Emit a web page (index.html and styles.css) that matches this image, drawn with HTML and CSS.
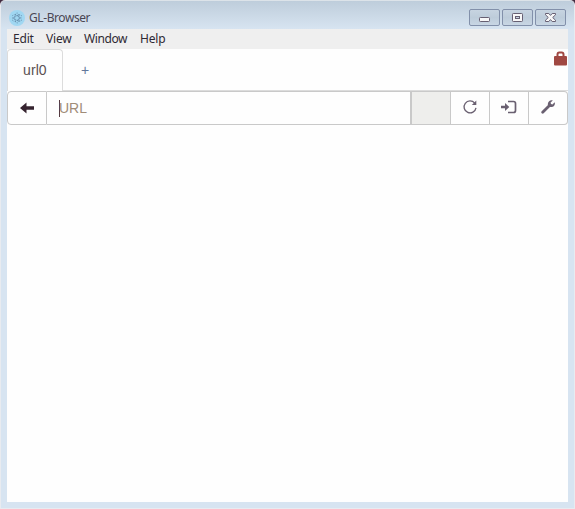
FILE: index.html
```
<!DOCTYPE html>
<html lang="en">
<head>
<meta charset="utf-8">
<title>GL-Browser</title>
<link rel="stylesheet" href="styles.css">
</head>
<body>
<div class="window">
  <header class="titlebar">
    <svg class="app-icon" width="16" height="16" viewBox="0 0 16 16">
      <circle cx="8" cy="8" r="8" fill="#a0d7f2"/>
      <g fill="none" stroke="#587c9c" stroke-width=".8" stroke-dasharray="1.200 1.200">
        <ellipse cx="8" cy="8" rx="2.2" ry="5"/>
        <ellipse cx="8" cy="8" rx="2.2" ry="5" transform="rotate(60 8 8)"/>
        <ellipse cx="8" cy="8" rx="2.2" ry="5" transform="rotate(-60 8 8)"/>
      </g>
    </svg>
    <span class="title">GL-Browser</span>
    <div class="controls">
      <span class="control"><svg width="29" height="15" viewBox="0 0 29 15"><rect x="9.5" y="7.5" width="10" height="4" rx=".8" fill="#f7f7f8" stroke="#665f72"/></svg></span>
      <span class="control"><svg width="29" height="15" viewBox="0 0 29 15"><rect x="9.500" y="3.500" width="10" height="8" rx=".8" fill="#f7f7f8" stroke="#665f72"/><rect x="12.500" y="6.500" width="4" height="2" fill="#c5d1df" stroke="#665f72"/></svg></span>
      <span class="control"><svg width="29" height="15" viewBox="0 0 29 15"><path d="M9.500 3.500h3.300l1.700 1.900 1.700-1.900h3.300v1.300L16.700 7.500l2.800 2.700v1.300h-3.300l-1.700-1.900-1.700 1.900H9.500v-1.300l2.800-2.700-2.800-2.700z" fill="#f7f7f8" stroke="#665f72"/></svg></span>
    </div>
  </header>
  <main class="client">
    <nav class="menu"><span class="edit">Edit</span><span class="view">View</span><span class="win">Window</span><span>Help</span></nav>
    <div class="tabs">
      <span class="tab">url0</span><span class="add">+</span>
      <svg class="lock" width="13" height="15" viewBox="0 0 13 15"><path d="M3.500 7V3.600Q3.500 1.500 5.300 1.500h2.400q1.800 0 1.800 2.100V7" fill="none" stroke="#a04842" stroke-width="2"/><rect y="5" width="13" height="9.500" rx="1" fill="#a04842"/></svg>
    </div>
    <div class="toolbar">
      <button class="btn back" aria-label="Back"><svg width="14" height="12" viewBox="0 0 14 12"><path d="M0 6 6.500 .5V4.300H14v3.400H6.500v3.800z" fill="#35232f"/></svg></button>
      <div class="address"><span class="caret"></span><span class="placeholder">URL</span></div>
      <div class="status"></div>
      <button class="btn" aria-label="Reload"><svg width="16" height="16" viewBox="0 0 16 16"><path d="M12.700 4.100A6 6 0 1 0 14 8.900" fill="none" stroke="#6a6071" stroke-width="1.300"/><path d="M14.300 1.500v4.500H9.800z" fill="#6a6071"/></svg></button>
      <button class="btn" aria-label="Open"><svg width="16" height="14" viewBox="0 0 16 14"><path d="M0 5.700h4V3L8.300 7 4 11V8.300H0z" fill="#6a6071"/><path d="M7 1.500h5.500q2 0 2 2v7q0 2-2 2H7" fill="none" stroke="#6a6071" stroke-width="1.700"/></svg></button>
      <button class="btn last" aria-label="Settings"><svg width="14" height="14" viewBox="0 0 14 14"><path d="M1.700 12.300 9 5" stroke="#6a6071" stroke-width="2.800" stroke-linecap="round"/><path d="M11.800.4 9.600 2.600l.3 1.500 1.500.3 2.300-2.200c.8 2.300-.6 4.900-3.200 4.900-.6 0-1.100-.1-1.600-.3L6.800 4.700C6.500 1.600 9.100-.5 11.800.4z" fill="#6a6071"/></svg></button>
    </div>
  </main>
</div>
</body>
</html>
```
FILE: styles.css
```
* { box-sizing: border-box; }
html { background: #412a40; }
body { margin: 0; }
.window {
  height: 509px;
  padding: 0 6px 6px;
  border: 1px solid #e8ebf0;
  border-top-color: #dce3e9;
  border-radius: 5px 5px 0 0;
  background: linear-gradient(#becddb 0, #d7e4f1 28px, #d7e4f1 100%);
}
.titlebar {
  display: flex;
  align-items: flex-start;
  height: 28px;
  padding: 9px 2px 0 2px;
}
.title {
  margin-left: 4px;
  font: 12px/16px "Noto Sans", sans-serif;
  letter-spacing: -.42px;
  color: #494653;
}
.controls { display: flex; gap: 2px; margin: -1px 0 0 auto; }
.control {
  display: flex;
  width: 31px;
  height: 17px;
  border: 1px solid #8290aa;
  border-radius: 2px;
  background: linear-gradient(#c7d4e1, #bdccda 50%, #c8d6e4);
}
.client { height: 473px; background: #fefefe; }
.menu {
  display: flex;
  height: 20px;
  padding-left: 6px;
  background: #efefef;
  font: 12px/20px "Noto Sans", sans-serif;
  letter-spacing: -.2px;
  color: #2e2933;
}
.edit { width: 33px; }
.view { width: 38px; }
.win { width: 56px; letter-spacing: -.4px; }
.tabs {
  display: flex;
  height: 42px;
  border-bottom: 1px solid #dcdcdc;
  font: 14px/42px "Liberation Sans", Arial, sans-serif;
}
.tab {
  width: 56px;
  height: 42px;
  padding-left: 15px;
  border: 1px solid #dcdcdc;
  border-bottom: 0;
  border-radius: 4px 4px 0 0;
  background: #fefefe;
  color: #5b5053;
  line-height: 40px;
  letter-spacing: .1px;
}
.add { margin-left: 18px; color: #62779b; }
.lock { margin: 2px 1px 0 auto; }
.toolbar { display: flex; height: 34px; }
.btn {
  display: flex;
  align-items: center;
  justify-content: center;
  width: 39px;
  padding: 0 0 2px;
  border: 1px solid #c9c9c9;
  border-left: 0;
  background: #fefefe;
}
.back { width: 40px; padding-bottom: 0; border-left: 1px solid #c9c9c9; border-radius: 4px 0 0 4px; }
.last { border-radius: 0 4px 4px 0; }
.address {
  display: flex;
  flex: 1;
  align-items: center;
  padding-left: 12px;
  border: 1px solid #c9c9c9;
  border-left: 0;
  font: 14px/32px "Liberation Sans", Arial, sans-serif;
  color: #a08c78;
}
.caret { width: 1px; height: 17px; background: #553a40; }
.placeholder { margin-left: -1px; }
.status { width: 40px; border: 1px solid #c9c9c9; background: #eeeeec; }
```
